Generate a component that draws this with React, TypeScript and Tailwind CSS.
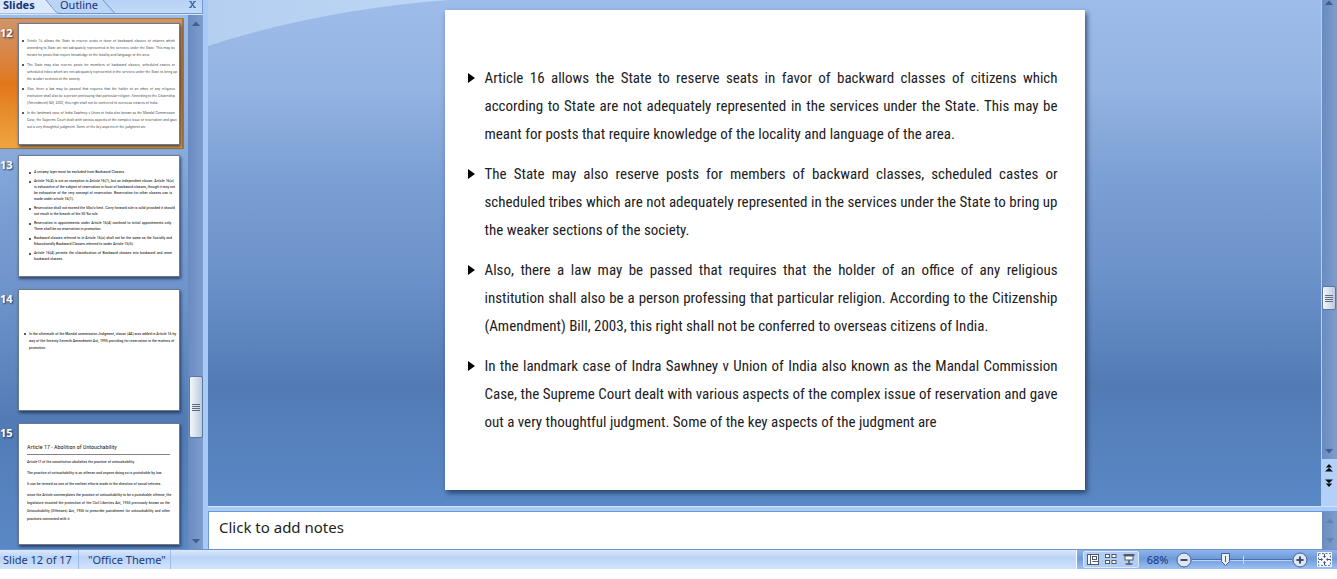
import React from "react";

const uiFont = "font-['Noto_Sans','Open_Sans',sans-serif]";
const slideFont = "font-['Roboto_Condensed',Roboto,sans-serif]";

type Paragraph = string[];

const slide12: Paragraph[] = [
  [
    "Article 16 allows the State to reserve seats in favor of backward classes of citizens which",
    "according to State are not adequately represented in the services under the State. This may be",
    "meant for posts that require knowledge of the locality and language of the area.",
  ],
  [
    "The State may also reserve posts for members of backward classes, scheduled castes or",
    "scheduled tribes which are not adequately represented in the services under the State to bring up",
    "the weaker sections of the society.",
  ],
  [
    "Also, there a law may be passed that requires that the holder of an office of any religious",
    "institution shall also be a person professing that particular religion. According to the Citizenship",
    "(Amendment) Bill, 2003, this right shall not be conferred to overseas citizens of India.",
  ],
  [
    "In the landmark case of Indra Sawhney v Union of India also known as the Mandal Commission",
    "Case, the Supreme Court dealt with various aspects of the complex issue of reservation and gave",
    "out a very thoughtful judgment. Some of the key aspects of the judgment are",
  ],
];

const slide13: Paragraph[] = [
  ["A creamy layer must be excluded from Backward Classes."],
  [
    "Article 16(4) is not an exception to Article 16(1), but an independent clause. Article 16(a)",
    "is exhaustive of the subject of reservation in favor of backward classes, though it may not",
    "be exhaustive of the very concept of reservation. Reservation for other classes can is",
    "made under article 16(1).",
  ],
  [
    "Reservation shall not exceed the 50o/o limit. Carry forward rule is valid provided it should",
    "not result in the breach of the 50 %o rule.",
  ],
  [
    "Reservation in appointments under Article 16(4) confined to initial appointments only.",
    "There shall be no reservation in promotion.",
  ],
  [
    "Backward classes referred to in Article 16(a) shall not be the same as the Socially and",
    "Educationally Backward Classes referred to under Article 15(5).",
  ],
  [
    "Article 16(4) permits the classification of Backward classes into backward and more",
    "backward classes.",
  ],
];

const slide14: Paragraph[] = [
  [
    "In the aftermath of the Mandal commission Judgment, clause (4A) was added in Article 16 by",
    "way of the Seventy Seventh Amendment Act, 1995 providing for reservation in the matters of",
    "promotion.",
  ],
];

const slide15: Paragraph[] = [
  ["Article l7 of the constitution abolishes the practice of untouchability."],
  ["The practice of untouchability is an offense and anyone doing so is punishable by law."],
  ["It can be termed as one of the earliest efforts made in the direction of social reforms."],
  [
    "since the Article contemplates the practice of untouchability to be a punishable offense, the",
    "legislature enacted the protection of the Civil Liberties Act, 1955 previously known as the",
    "Untouchability (Offenses) Act, 1955 to prescribe punishment for untouchability and other",
    "practices connected with it.",
  ],
];

function Lines({ lines }: { lines: Paragraph }) {
  return (
    <>
      {lines.map((line, i) => (
        <span
          key={line}
          className={
            i < lines.length - 1
              ? "block whitespace-nowrap text-justify [text-align-last:justify]"
              : "block whitespace-nowrap"
          }
        >
          {line}
        </span>
      ))}
    </>
  );
}

function MiniList({ items, className }: { items: Paragraph[]; className: string }) {
  return (
    <span className={`flex flex-col text-[4px] text-black ${slideFont} ${className}`}>
      {items.map((p) => (
        <span key={p[0]} className="flex gap-[3px]">
          <span className="mt-[3px] h-[2px] w-[2px] shrink-0 rounded-full bg-[#222]" />
          <span className="min-w-0 flex-1">
            <Lines lines={p} />
          </span>
        </span>
      ))}
    </span>
  );
}

function Thumb({ n, selected, children }: { n: number; selected?: boolean; children: React.ReactNode }) {
  return (
    <li
      className={
        selected
          ? "flex h-[131px] items-start border-y border-r-2 border-[#a8763a] bg-linear-to-b from-[#cf9468] via-[#e07818] to-[#f0a540] pt-1"
          : "flex h-[134px] items-start pt-1"
      }
    >
      <span className="w-[18px] shrink-0 pt-[2px] text-[11px] leading-4 font-bold text-white [text-shadow:1px_1px_2px_#1d3558]">
        {n}
      </span>
      <button
        type="button"
        aria-label={`Slide ${n}`}
        className="block h-[122px] w-[162px] shrink-0 overflow-hidden border border-[#6b7a90] bg-white text-left shadow-[1px_2px_3px_rgba(20,35,60,0.7)]"
      >
        {children}
      </button>
    </li>
  );
}

function Arrow({ up, faded }: { up?: boolean; faded?: boolean }) {
  return (
    <svg viewBox="0 0 10 6" className="h-[5px] w-[10px]" aria-hidden="true">
      <path d={up ? "M0 6 L5 0.5 L10 6Z" : "M0 0 L5 5.5 L10 0Z"} fill={faded ? "#6682ae" : "#415f8e"} />
    </svg>
  );
}

function Grip() {
  return (
    <span className="flex flex-col gap-px">
      <span className="h-px w-2 bg-[#5d6d80]" />
      <span className="h-px w-2 bg-[#5d6d80]" />
      <span className="h-px w-2 bg-[#5d6d80]" />
      <span className="h-px w-2 bg-[#5d6d80]" />
    </span>
  );
}

const scrollTrack = "flex w-[15px] shrink-0 flex-col items-center bg-linear-to-r from-[#6a8bbf] to-[#7d9dce]";
const scrollThumb =
  "flex w-[14px] items-center justify-center rounded-[2px] border border-[#5d779f] bg-linear-to-r from-[#f4f7fb] to-[#bccade]";
const paneFill =
  "bg-[linear-gradient(to_bottom,#9dbce9_0%,#93b3e2_18%,#7ba0d4_35%,#6c92ca_54%,#527bb5_76%,#5a88c6_100%)]";

function DoubleArrow({ up }: { up?: boolean }) {
  return (
    <svg viewBox="0 0 10 10" className="h-[10px] w-2" aria-hidden="true">
      <path
        d={up ? "M5 0 L9 4.4 H1Z M5 4.6 L10 9.5 H0Z" : "M0 0.5 H10 L5 5.4Z M1 5.6 H9 L5 10Z"}
        fill="#080c14"
      />
    </svg>
  );
}

export default function App() {
  return (
    <div className={`flex h-screen flex-col overflow-hidden bg-white pb-[10px] ${uiFont}`}>
      <div className="flex min-h-0 flex-1 bg-[#a9cbf7]">
        <aside className="flex w-[203px] shrink-0 flex-col">
          <header className="flex h-[14px] shrink-0 items-start border-r border-b border-[#6f96cf] bg-linear-to-b from-[#b7d2f6] to-[#c3daf8] text-[11px] leading-[10px] text-[#15347c]">
            <div role="tablist" className="relative flex h-full flex-1 items-start">
              <svg
                viewBox="0 0 120 14"
                className="absolute top-0 left-0 h-[14px] w-[120px]"
                aria-hidden="true"
              >
                <path d="M0 0 H46 L59 13.500 H0Z" fill="#dce9fb" />
                <path d="M47 0 L56 11 Q58 13.500 62 13.500 H116 L103 0Z" fill="#bcd5f7" />
                <path d="M46 0 L55 11 Q57 13.500 61 13.500 H120" fill="none" stroke="#6f96cf" />
                <path d="M103 0 L115 13.500" fill="none" stroke="#6f96cf" />
              </svg>
              <button type="button" role="tab" aria-selected="true" className="relative w-[60px] pl-[3px] text-left font-bold">
                Slides
              </button>
              <button type="button" role="tab" aria-selected="false" className="relative">
                Outline
              </button>
            </div>
            <button type="button" aria-label="Close pane" className="mr-[6px] pt-px">
              <svg viewBox="0 0 8 8" className="h-[7px] w-[7px]" aria-hidden="true">
                <path d="M0 0.500 H3 M5 0.500 H8 M0 7.500 H3 M5 7.500 H8" stroke="#41689f" />
                <path d="M1.500 0.500 L6.500 7.500 M6.500 0.500 L1.500 7.500" stroke="#41689f" strokeWidth="1.600" />
              </svg>
            </button>
          </header>
          <div className="flex min-h-0 flex-1 border-t border-[#d5e6fc]">
            <ol className={`min-w-0 flex-1 overflow-hidden pt-[3px] pr-[4px] ${paneFill}`}>
              <Thumb n={12} selected>
                <MiniList items={slide12} className="h-full gap-[3px] pt-[13px] pr-1 pl-[3px] leading-[7px] font-light" />
              </Thumb>
              <li className="h-[2px]" aria-hidden="true" />
              <Thumb n={13}>
                <MiniList items={slide13} className="h-full gap-[3px] pt-[13px] pr-[7px] pl-[10px] leading-[6px]" />
              </Thumb>
              <Thumb n={14}>
                <MiniList items={slide14} className="h-full pt-10 pr-[5px] pl-[5px] leading-[7px]" />
              </Thumb>
              <Thumb n={15}>
                <span className={`flex h-full flex-col pt-5 pr-[9px] pl-2 text-[#222] ${slideFont}`}>
                  <span className="border-b border-[#8c7f8c] pb-1 text-[6px] leading-[6px]">
                    Article 17 - Abolition of Untouchability
                  </span>
                  <span className="flex flex-col gap-[3px] pt-[3px] text-[4px] leading-[8px] text-black">
                    {slide15.map((p) => (
                      <span key={p[0]} className="block">
                        <Lines lines={p} />
                      </span>
                    ))}
                  </span>
                </span>
              </Thumb>
            </ol>
            <div className={`${scrollTrack} pt-[6px] pb-[5px]`}>
              <Arrow up />
              <div className={`mt-[350px] h-[62px] ${scrollThumb}`}>
                <Grip />
              </div>
              <span className="mt-auto flex">
                <Arrow />
              </span>
            </div>
          </div>
        </aside>

        <div className="ml-[5px] flex min-w-0 flex-1 flex-col">
          <div className="flex min-h-0 flex-1">
            <main className={`relative flex min-w-0 flex-1 justify-center pt-[10px] pb-4 ${paneFill}`}>
              <svg
                viewBox="0 0 240 48"
                className="absolute top-0 left-0 h-12 w-[240px]"
                aria-hidden="true"
              >
                <defs>
                  <linearGradient id="swoosh" x1="0" y1="0" x2="1" y2="0">
                    <stop offset="0" stopColor="#b5cff1" />
                    <stop offset="1" stopColor="#bdd6f5" />
                  </linearGradient>
                </defs>
                <path d="M0 0 H240 Q110 10 0 46Z" fill="url(#swoosh)" />
              </svg>
              <article
                className={`relative aspect-[4/3] h-full min-w-0 shrink-0 bg-white pt-[54px] pr-[27px] pl-[23px] shadow-[2px_3px_5px_rgba(25,45,80,0.75)] ${slideFont}`}
              >
                <ul className="flex flex-col gap-3 text-[15px] leading-7 text-[#1c211e]">
                  {slide12.map((p) => (
                    <li key={p[0]} className="flex gap-[10px]">
                      <svg viewBox="0 0 7 10" className="mt-[9px] h-[10px] w-[7px] shrink-0" aria-hidden="true">
                        <path d="M0 0 L7 5 L0 10Z" fill="#050505" />
                      </svg>
                      <p className="min-w-0 flex-1">
                        <Lines lines={p} />
                      </p>
                    </li>
                  ))}
                </ul>
              </article>
            </main>
            <div className="flex w-4 shrink-0 flex-col items-center bg-[#b2d0f8]">
              <div className={`${scrollTrack} flex-1 pb-[5px]`}>
                <Arrow up />
                <div className={`mt-[281px] h-6 ${scrollThumb}`}>
                  <Grip />
                </div>
                <span className="mt-auto flex">
                  <Arrow />
                </span>
              </div>
              <div className="flex h-[47px] flex-col items-center gap-[5px] pt-1">
                <button type="button" aria-label="Previous slide" className="flex">
                  <DoubleArrow up />
                </button>
                <button type="button" aria-label="Next slide" className="flex">
                  <DoubleArrow />
                </button>
              </div>
            </div>
          </div>

          <div className="h-[6px] shrink-0 border-t border-b border-t-[#d5e6fc] border-b-[#6c98d8] bg-[#a9cbf7]" />

          <div className="flex h-[37px] shrink-0">
            <textarea
              aria-label="Notes"
              defaultValue="Click to add notes"
              className="block min-w-0 flex-1 resize-none overflow-hidden border-l border-[#6c98d8] bg-white px-[10px] pt-1 text-[15px] leading-[22px] text-[#222] outline-none"
            />
            <div className={`${scrollTrack} w-4 justify-between py-[6px]`}>
              <Arrow up faded />
              <Arrow faded />
            </div>
          </div>
        </div>
      </div>

      <footer className="flex h-5 shrink-0 items-stretch border-t border-[#6b93cc] bg-linear-to-b from-[#dbe9fc] via-[#b9d3f7] via-40% to-[#d3e4fc] text-[11px] leading-[19px] text-[#1a3a7c]">
        <span className="w-[79px] border-r border-[#9dbde8] pl-[3px]">Slide 12 of 17</span>
        <span className="w-[92px] border-r border-[#9dbde8] pl-[9px]">"Office Theme"</span>
        <div className="ml-auto flex items-center border-l border-white bg-linear-to-b from-[#8fb4ea] via-[#6f9bdc] via-45% to-[#9cc0f2] pr-[5px] pl-[6px]">
          <div className="flex h-[17px] items-center rounded-[2px] border border-[#dbe8fa] bg-[#b3cdf2]">
            <button type="button" aria-label="Normal view" className="flex w-[18px] justify-center">
              <svg viewBox="0 0 12 11" className="h-[11px] w-3" aria-hidden="true">
                <rect x="0.500" y="0.500" width="11" height="10" fill="#fff" stroke="#4e5b6e" />
                <path d="M3.500 1 V10 M5.500 7.500 H11" stroke="#4e5b6e" />
                <rect x="5.500" y="2.500" width="4" height="3" fill="#fff" stroke="#4e5b6e" />
              </svg>
            </button>
            <button type="button" aria-label="Slide sorter" className="flex w-[18px] justify-center">
              <svg viewBox="0 0 12 11" className="h-[11px] w-3" aria-hidden="true">
                <g fill="#fff" stroke="#4e5b6e">
                  <rect x="0.500" y="0.500" width="4" height="3" />
                  <rect x="7" y="0.500" width="4" height="3" />
                  <rect x="0.500" y="6.500" width="4" height="3" />
                  <rect x="7" y="6.500" width="4" height="3" />
                </g>
              </svg>
            </button>
            <button type="button" aria-label="Slide show" className="flex w-[18px] justify-center">
              <svg viewBox="0 0 12 11" className="h-[11px] w-3" aria-hidden="true">
                <path d="M0.500 1 H11.500" stroke="#4e5b6e" strokeWidth="2" />
                <rect x="2" y="2" width="8" height="4" fill="#fff" stroke="#4e5b6e" />
                <path d="M6 6 V9.500 M2.500 10 H9.500" stroke="#4e5b6e" strokeWidth="1.500" />
              </svg>
            </button>
          </div>
          <button type="button" className="w-[37px] text-center">
            68%
          </button>
          <button type="button" aria-label="Zoom out" className="flex">
            <svg viewBox="0 0 16 16" className="h-4 w-4" aria-hidden="true">
              <circle cx="8" cy="8" r="7" fill="#dbe7f6" stroke="#47618d" />
              <path d="M4.500 8 H11.500" stroke="#3f4c60" strokeWidth="2" />
            </svg>
          </button>
          <span className="relative flex h-4 w-[100px] items-center">
            <svg viewBox="0 0 100 16" className="h-4 w-[100px]" aria-hidden="true">
              <path d="M0 7.500 H100" stroke="#4770ad" />
              <path d="M0 8.500 H100" stroke="#b9d2f5" />
              <path d="M51.500 4 V12" stroke="#c9dcf7" />
              <path d="M29.500 1.500 H37.500 V9.500 L33.500 13.500 L29.500 9.500Z" fill="#e6eef9" stroke="#47618d" />
              <path d="M33.500 4 V10" stroke="#47618d" />
            </svg>
            <input
              type="range"
              aria-label="Zoom"
              min={10}
              max={400}
              defaultValue={68}
              className="absolute inset-0 h-full w-full opacity-0"
            />
          </span>
          <button type="button" aria-label="Zoom in" className="flex">
            <svg viewBox="0 0 16 16" className="h-4 w-4" aria-hidden="true">
              <circle cx="8" cy="8" r="7" fill="#dbe7f6" stroke="#47618d" />
              <path d="M4.500 8 H11.500 M8 4.500 V11.500" stroke="#3f4c60" strokeWidth="2" />
            </svg>
          </button>
          <button type="button" aria-label="Fit slide to window" className="ml-[9px] flex">
            <svg viewBox="0 0 15 15" className="h-[15px] w-[15px]" aria-hidden="true">
              <rect width="15" height="15" rx="1" fill="#f3f7fc" />
              <rect x="1.500" y="1.500" width="12" height="12" fill="none" stroke="#66758a" strokeDasharray="2 1.500" />
              <path d="M7.500 2 V5 M7.500 10 V13 M2 7.500 H5 M10 7.500 H13" stroke="#3f4c60" />
              <path d="M6 4 H9 L7.500 6Z M6 11 H9 L7.500 9Z M4 6 V9 L6 7.500Z M11 6 V9 L9 7.500Z" fill="#3f4c60" />
            </svg>
          </button>
        </div>
      </footer>
    </div>
  );
}
